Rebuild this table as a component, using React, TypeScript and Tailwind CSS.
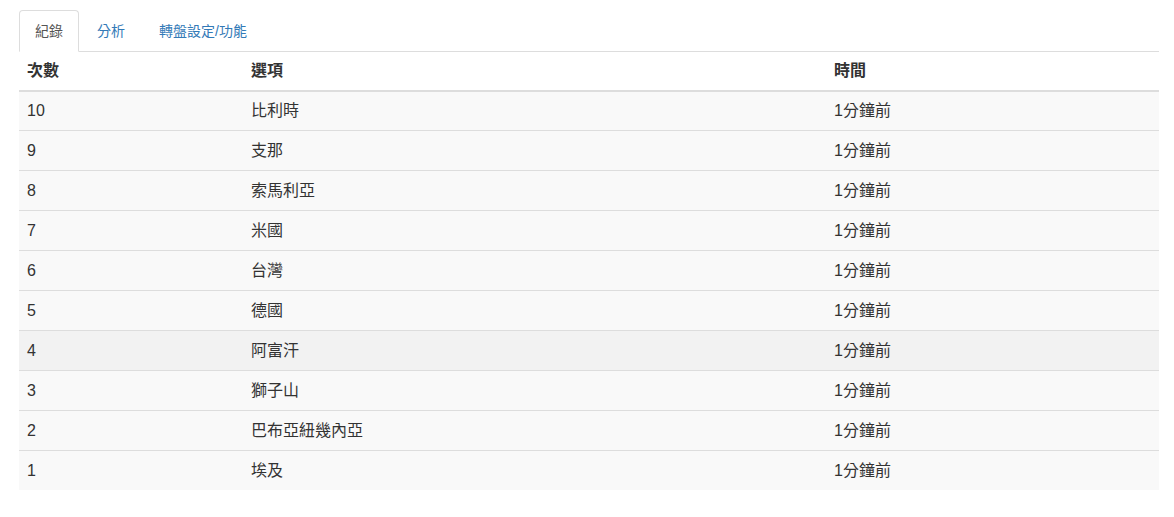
import React from "react";

const rows: [string, string][] = [
  ["10", "比利時"],
  ["9", "支那"],
  ["8", "索馬利亞"],
  ["7", "米國"],
  ["6", "台灣"],
  ["5", "德國"],
  ["4", "阿富汗"],
  ["3", "獅子山"],
  ["2", "巴布亞紐幾內亞"],
  ["1", "埃及"],
];

export default function App() {
  return (
    <div
      className="w-[1174px] h-[517px] bg-white text-[14px] leading-[20px] text-[#333]"
      style={{ fontFamily: '"Liberation Sans", "Noto Sans CJK TC", sans-serif' }}
    >
      <div className="ml-[19px] w-[1140px] pt-[10px]">
        <ul className="flex border-b border-[#ddd]">
          <li className="mr-[2px] -mb-px">
            <span className="block px-[15px] py-[10px] border border-[#ddd] border-b-white rounded-t-[4px] bg-white text-[#555]">
              紀錄
            </span>
          </li>
          <li className="mr-[2px] -mb-px">
            <span className="block px-[15px] py-[10px] border border-transparent rounded-t-[4px] text-[#337ab7]">
              分析
            </span>
          </li>
          <li className="mr-[2px] -mb-px">
            <span className="block px-[15px] py-[10px] border border-transparent rounded-t-[4px] text-[#337ab7]">
              轉盤設定/功能
            </span>
          </li>
        </ul>
        <div className="text-[16px] leading-[22px]">
          <div className="grid grid-cols-[224px_583px_1fr] h-[40px] items-center border-b-2 border-[#ddd] font-bold">
            <div className="px-[8px]">次數</div>
            <div className="px-[8px]">選項</div>
            <div className="px-[8px]">時間</div>
          </div>
          {rows.map(([n, name], i) => (
            <div
              key={n}
              className={`grid grid-cols-[224px_583px_1fr] items-center ${
                i === 0 ? "h-[38px]" : "h-[40px] border-t border-[#ddd]"
              } ${i === 6 ? "bg-[#f2f2f2]" : "bg-[#f9f9f9]"}`}
            >
              <div className="px-[8px]">{n}</div>
              <div className="px-[8px]">{name}</div>
              <div className="px-[8px]">1分鐘前</div>
            </div>
          ))}
        </div>
      </div>
    </div>
  );
}
